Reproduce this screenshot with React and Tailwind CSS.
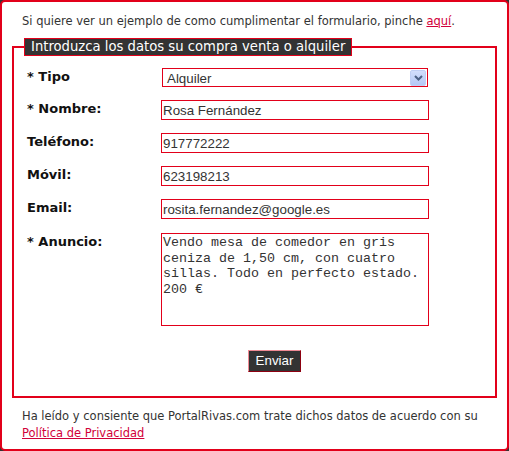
export default function App() {
  const red = "border-[#e2001a]";
  const labelCls =
    "w-[134px] shrink-0 text-[13px] font-bold text-[#111] leading-[16px] mt-[1px] font-['DejaVu_Sans',Verdana,sans-serif]";
  const inputCls =
    "w-[268px] h-[20px] border border-[#e2001a] px-[1px] text-[13.33px] text-[#333] leading-[18px] outline-none bg-white";
  return (
    <div className="w-[509px] h-[451px] bg-[#333] font-['DejaVu_Sans',Verdana,sans-serif]">
      <div className="w-[509px] h-[451px] bg-white border-2 border-[#e2001a] rounded-[5px] pt-[12px]">
        <p className="pl-[20px] text-[11.5px] leading-[14px] text-[#333]">
          Si quiere ver un ejemplo de como cumplimentar el formulario, pinche{" "}
          <a href="#" className="text-[#d1003a] underline">
            aquí
          </a>
          .
        </p>
        <fieldset className={`ml-[10px] mt-[10px] w-[485px] h-[360px] border-2 ${red} px-[13px] pt-[12px]`}>
          <legend className="-ml-[3px] bg-[#333] border border-[#e2001a] text-white text-[13.2px] leading-[16px] px-[6px]">
            Introduzca los datos su compra venta o alquiler
          </legend>
          <div className="flex flex-col font-['Liberation_Sans',Arial,sans-serif]">
            <div className="flex items-start mb-[13px]">
              <label className={labelCls}>* Tipo</label>
              <div className="ml-[1px] w-[266px] h-[19px] border border-[#e2001a] flex items-center justify-between pl-[4px] pr-[1px]">
                <span className="text-[13.33px] text-[#333] leading-[17px] mt-[2px]">Alquiler</span>
                <span className="w-[16px] h-[16px] rounded-[2px] bg-gradient-to-b from-[#d3defc] to-[#b4c8f6] border border-[#c0cff5] flex items-center justify-center">
                  <svg width="9" height="6" viewBox="0 0 9 6">
                    <path d="M1 1 L4.5 4.5 L8 1" stroke="#4d6185" strokeWidth="2" fill="none" />
                  </svg>
                </span>
              </div>
            </div>
            <div className="flex items-start mb-[13px]">
              <label className={labelCls}>* Nombre:</label>
              <input className={inputCls} defaultValue="Rosa Fernández" />
            </div>
            <div className="flex items-start mb-[13px]">
              <label className={labelCls}>Teléfono:</label>
              <input className={inputCls} defaultValue="917772222" />
            </div>
            <div className="flex items-start mb-[13px]">
              <label className={labelCls}>Móvil:</label>
              <input className={inputCls} defaultValue="623198213" />
            </div>
            <div className="flex items-start mb-[14px]">
              <label className={labelCls}>Email:</label>
              <input className={inputCls} defaultValue="rosita.fernandez@google.es" />
            </div>
            <div className="flex items-start">
              <label className={labelCls}>* Anuncio:</label>
              <textarea
                className="w-[268px] h-[93px] border border-[#e2001a] px-[1px] pt-[1px] text-[13.33px] leading-[15.5px] text-[#333] font-['Courier_New','Liberation_Mono',monospace] resize-none outline-none"
                defaultValue={"Vendo mesa de comedor en gris ceniza de 1,50 cm, con cuatro sillas. Todo en perfecto estado. 200 €"}
              />
            </div>
            <div className="flex justify-center mt-[24px]">
              <button className="ml-[40px] h-[22px] px-[7px] bg-[#333] text-white text-[13.33px] leading-[18px] border border-t-[#f08a94] border-l-[#f08a94] border-r-[#8c0010] border-b-[#8c0010]">
                Enviar
              </button>
            </div>
          </div>
        </fieldset>
        <p className="pl-[20px] mt-[10px] text-[11.5px] leading-[17px] text-[#333]">
          Ha leído y consiente que PortalRivas.com trate dichos datos de acuerdo con su
          <br />
          <a href="#" className="text-[#d1003a] underline">
            Política de Privacidad
          </a>
        </p>
      </div>
    </div>
  );
}
